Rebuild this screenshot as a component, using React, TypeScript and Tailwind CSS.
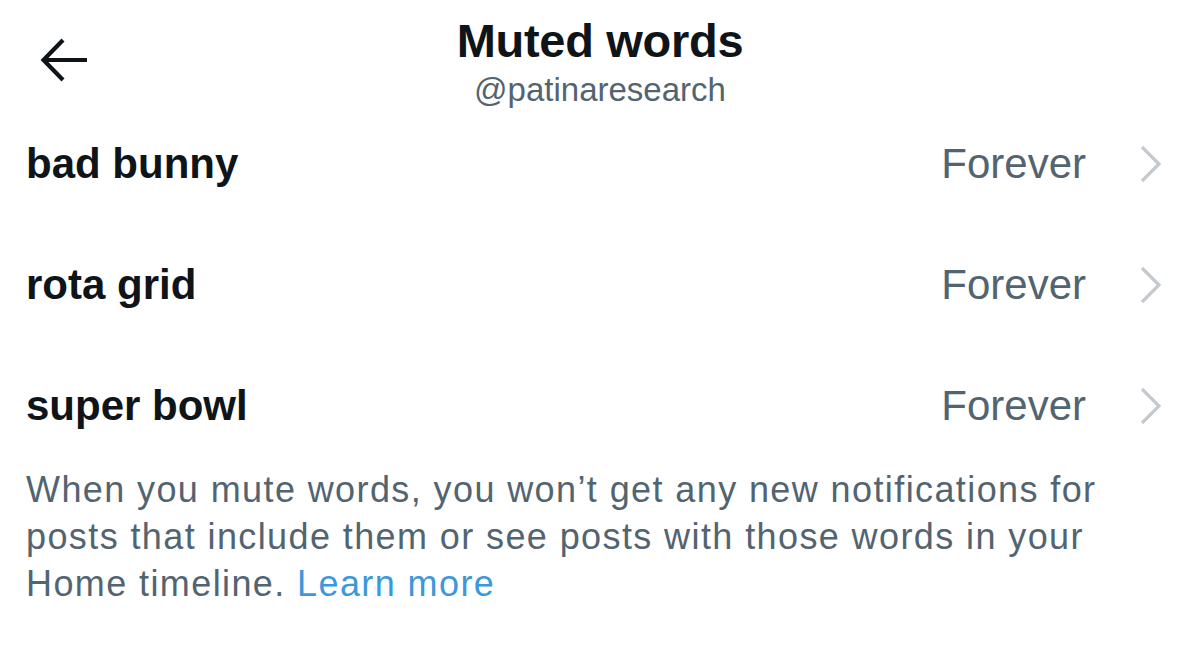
import React from "react";

const rows = ["bad bunny", "rota grid", "super bowl"];

function BackArrow() {
  return (
    <svg width="50" height="44" viewBox="0 0 50 44" fill="none">
      <path d="M47 22H4" stroke="#0f1419" strokeWidth="4.2" />
      <path d="M23 2L3.5 22L23 42" stroke="#0f1419" strokeWidth="4.2" />
    </svg>
  );
}

function Chevron() {
  return (
    <svg width="22" height="38" viewBox="0 0 22 38" fill="none">
      <path d="M2 2L19 19L2 36" stroke="#c3c9cf" strokeWidth="3.2" />
    </svg>
  );
}

export default function App() {
  return (
    <div
      className="w-[1200px] h-[672px] bg-white overflow-hidden"
      style={{ fontFamily: '"Liberation Sans", Arial, sans-serif' }}
    >
      <div className="grid grid-cols-[1fr_auto_1fr] items-start h-[103px] px-[40px]">
        <div className="pt-[38px]">
          <BackArrow />
        </div>
        <div className="flex flex-col items-center pt-[14px]">
          <div className="text-[47px] leading-[54px] font-bold text-[#0f1419] tracking-[-0.3px]">
            Muted words
          </div>
          <div className="text-[33px] leading-[40px] text-[#536471] mt-[2px]">
            @patinaresearch
          </div>
        </div>
        <div />
      </div>
      {rows.map((r) => (
        <div
          key={r}
          className="h-[121px] flex items-center pl-[26px] pr-[38px]"
        >
          <div className="flex-1 text-[42px] font-bold text-[#0f1419]">
            {r}
          </div>
          <div className="text-[42px] text-[#536471] mr-[54px]">Forever</div>
          <Chevron />
        </div>
      ))}
      <p className="pl-[26px] text-[36px] leading-[47px] tracking-[1.4px] text-[#536471] whitespace-nowrap">
        When you mute words, you won’t get any new notifications for
        <br />
        posts that include them or see posts with those words in your
        <br />
        Home timeline. <span className="text-[#3d97db]">Learn more</span>
      </p>
    </div>
  );
}
